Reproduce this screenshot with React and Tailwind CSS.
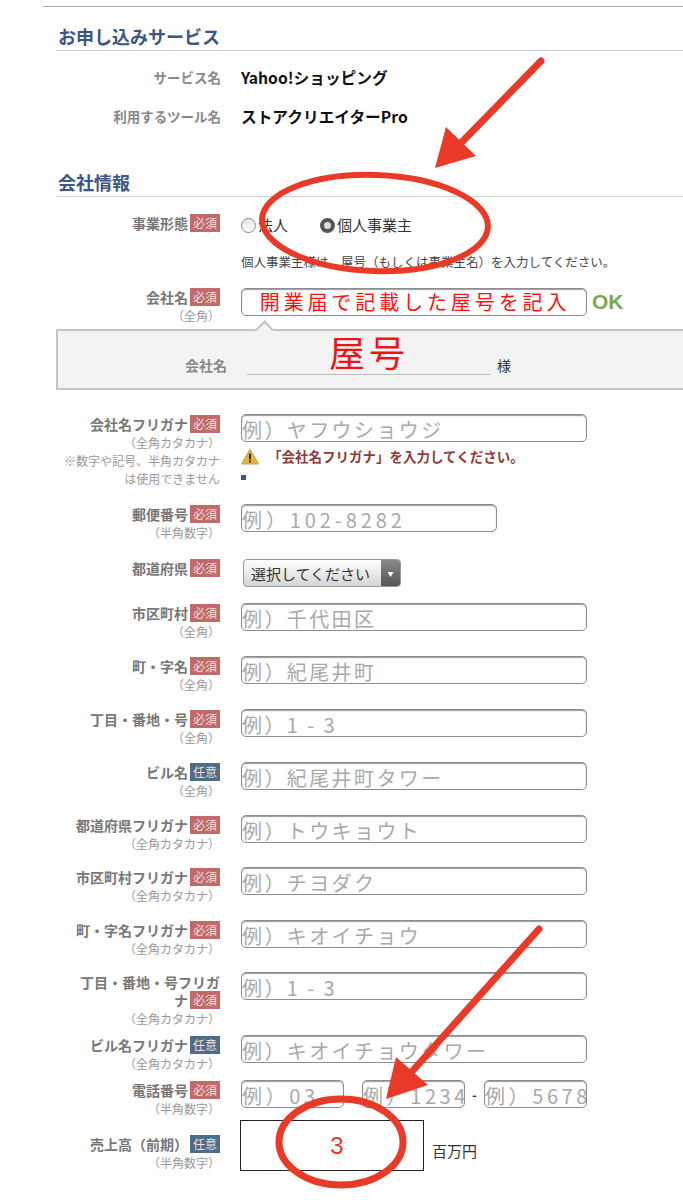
import React from 'react';

const fieldClass =
  'h-[28px] rounded-[5px] border border-[#8d8d8d] shadow-[inset_0_1px_1px_#999] bg-white text-[20px] outline-none placeholder:text-[#a9a9a9] min-w-0';

const Badge = ({ optional }) => (
  <span
    className={`inline-block w-[30px] h-[18px] ml-[2px] align-top text-center text-[12px] leading-[18px] font-normal text-[#f3dede] ${
      optional ? 'bg-[#4f6d85]' : 'bg-[#c06a6a]'
    }`}
  >
    {optional ? '任意' : '必須'}
  </span>
);

// ラベル列 + 入力列の1行
const Row = ({ label, optional, sub, note, height, labelClass = '', children }) => (
  <div className={`flex ${height}`}>
    <div className={`w-[164px] shrink-0 text-right text-[14px] leading-[18px] font-bold text-[#777] ${labelClass}`}>
      <div>
        {label}
        <Badge optional={optional} />
      </div>
      {sub && <div className="text-[12px] leading-[19px] font-normal text-[#999]">{sub}</div>}
      {note && <div className="text-[12px] leading-[18px] font-normal text-[#999]">{note}</div>}
    </div>
    <div className="ml-[21px] flex-1 min-w-0">{children}</div>
  </div>
);

const Field = ({ placeholder, width = 'w-[346px]', tracking = 'tracking-[2.4px]' }) => (
  <input
    className={`${fieldClass} ${width} ${tracking} -mt-[1px] block pt-[3px] leading-[24px]`}
    placeholder={placeholder}
    readOnly
  />
);

const SectionTitle = ({ children, height }) => (
  <h2 className={`${height} flex items-end border-b border-[#cfcfcf] pb-[2px] pl-[2px] text-[18px] leading-[24px] font-bold text-[#3d5684]`}>
    {children}
  </h2>
);

const Radio = ({ checked }) => (
  <span
    className={`inline-block w-[15px] h-[15px] rounded-full ${
      checked
        ? 'border-[4px] border-[#555] bg-[#ddd]'
        : 'border border-[#8a8a8a] bg-gradient-to-b from-[#e5e5e5] to-white'
    }`}
  />
);

const rows = [
  { label: '市区町村', sub: '（全角）', placeholder: '例）千代田区', height: 'h-[53px]' },
  { label: '町・字名', sub: '（全角）', placeholder: '例）紀尾井町', height: 'h-[53px]' },
  { label: '丁目・番地・号', sub: '（全角）', placeholder: '例）1 - 3', height: 'h-[53px]' },
  { label: 'ビル名', optional: true, sub: '（全角）', placeholder: '例）紀尾井町タワー', height: 'h-[53px]' },
  { label: '都道府県フリガナ', sub: '（全角カタカナ）', placeholder: '例）トウキョウト', height: 'h-[52px]' },
  { label: '市区町村フリガナ', sub: '（全角カタカナ）', placeholder: '例）チヨダク', height: 'h-[53px]' },
  { label: '町・字名フリガナ', sub: '（全角カタカナ）', placeholder: '例）キオイチョウ', height: 'h-[52px]' },
  { label: <>丁目・番地・号フリガ<br />ナ</>, sub: '（全角カタカナ）', placeholder: '例）1 - 3', height: 'h-[63px]' },
  { label: 'ビル名フリガナ', optional: true, sub: '（全角カタカナ）', placeholder: '例）キオイチョウタワー', height: 'h-[45px]' },
];

export default function App() {
  return (
    <div className="relative w-[683px] h-[1200px] overflow-hidden bg-white font-['Noto_Sans_CJK_JP','Noto_Sans',sans-serif]">
      <div className="mt-[6px] ml-[43px] h-px bg-[#aaa]" />

      <div className="pl-[56px]">
        <SectionTitle height="h-[44px]">お申し込みサービス</SectionTitle>

        <div className="flex h-[36px] items-end leading-[19px]">
          <div className="w-[165px] shrink-0 text-right text-[13.5px] font-bold text-[#888]">サービス名</div>
          <div className="ml-[20px] text-[15.7px] font-bold text-[#111]">Yahoo!ショッピング</div>
        </div>
        <div className="flex h-[39px] items-end leading-[19px]">
          <div className="w-[165px] shrink-0 text-right text-[13.5px] font-bold text-[#888]">利用するツール名</div>
          <div className="ml-[20px] text-[15.7px] font-bold text-[#111]">ストアクリエイターPro</div>
        </div>

        <SectionTitle height="h-[71px]">会社情報</SectionTitle>

        <div className="mt-[17px]">
          <Row label="事業形態" height="h-[74px]">
            <div className="flex h-[22px] items-center text-[15px] text-[#333]">
              <Radio />
              <span className="ml-[2px] w-[62px]">法人</span>
              <Radio checked />
              <span className="ml-[2px]">個人事業主</span>
            </div>
            <p className="mt-[17px] text-[12.5px] leading-[18px] whitespace-nowrap text-[#444]">
              個人事業主様は、屋号（もしくは事業主名）を入力してください。
            </p>
          </Row>

          <Row label="会社名" sub="（全角）" height="h-[41px]">
            <div className="flex items-center">
              <input
                className={`${fieldClass} w-[346px] -mt-[1px] block pl-[2px] text-center text-[#ff1010] tracking-[3.9px]`}
                defaultValue="開業届で記載した屋号を記入"
                readOnly
              />
              <span className="ml-[5px] text-[21px] leading-[28px] font-bold text-[#7aa84c] font-['Liberation_Sans',sans-serif]">OK</span>
            </div>
          </Row>
        </div>

        {/* 吹き出し */}
        <div className="relative flex h-[61px] items-start border-2 border-r-0 border-[#c4c4c4] bg-[#f3f3f3]">
          <span className="absolute -top-[8px] left-[200px] w-[13px] h-[13px] rotate-45 border-t-2 border-l-2 border-[#c4c4c4] bg-[#f3f3f3]" />
          <span className="mt-[25px] w-[169px] text-right text-[14px] leading-[19px] font-bold text-[#888]">会社名</span>
          <div className="ml-[20px] w-[243px] h-[44px] border-b border-[#bbb] text-[36px] leading-[40px] tracking-[4px] pl-[82px] text-[#f01414] whitespace-nowrap">
            屋号
          </div>
          <span className="mt-[25px] ml-[7px] text-[14px] leading-[19px] text-[#333]">様</span>
        </div>

        <div className="mt-[25px]">
          <Row
            label="会社名フリガナ"
            sub="（全角カタカナ）"
            note={<>※数字や記号、半角カタカナ<br />は使用できません</>}
            height="h-[90px]"
          >
            <Field placeholder="例）ヤフウショウジ" />
            <div className="mt-[4px] flex h-[20px] items-center">
              <svg width="18" height="17" viewBox="0 0 18 17">
                <path d="M9 1 L17.5 16 H0.5 Z" fill="#e3b53c" stroke="#c9a24a" strokeLinejoin="round" />
                <rect x="8" y="5.5" width="2" height="6" fill="#3a2d10" />
                <rect x="8" y="12.5" width="2" height="2" fill="#3a2d10" />
              </svg>
              <span className="ml-[9px] text-[13.5px] font-bold text-[#8f3b3b] whitespace-nowrap">「会社名フリガナ」を入力してください。</span>
            </div>
            <div className="mt-[9px] w-[5px] h-[5px] bg-[#3d5684]" />
          </Row>

          <Row label="郵便番号" sub="（半角数字）" height="h-[54px]">
            <Field placeholder="例）102-8282" width="w-[256px]" tracking="tracking-[3.9px]" />
          </Row>

          <Row label="都道府県" height="h-[45px]">
            <div className="ml-[2px] flex h-[28px] w-[158px] overflow-hidden rounded-[4px] border border-[#999] bg-gradient-to-b from-white to-[#d5d5d5]">
              <span className="flex-1 pl-[7px] text-[15px] leading-[27px] text-[#333] whitespace-nowrap">選択してください</span>
              <span className="flex w-[19px] items-center justify-center bg-gradient-to-b from-[#8a8a8a] to-[#555] text-[6px] text-white">▼</span>
            </div>
          </Row>

          {rows.map((row) => (
            <Row key={row.placeholder + row.height} label={row.label} optional={row.optional} sub={row.sub} height={row.height}>
              <Field placeholder={row.placeholder} />
            </Row>
          ))}

          <Row label="電話番号" sub="（半角数字）" height="h-[39px]">
            <div className="flex w-[346px] items-center">
              <Field placeholder="例）03" width="w-[103px]" tracking="tracking-[3.6px]" />
              <span className="w-[18px]" />
              <Field placeholder="例）1234" width="w-[103px]" tracking="tracking-[3.6px]" />
              <span className="w-[19px] text-center text-[13px] font-bold text-[#333]">-</span>
              <Field placeholder="例）5678" width="w-[103px]" tracking="tracking-[3.6px]" />
            </div>
          </Row>

          <Row label="売上高（前期）" optional sub="（半角数字）" height="h-[51px]" labelClass="mt-[15px]">
            <div className="flex">
              <input
                className="-ml-[1px] h-[51px] w-[184px] border border-[#222] bg-white pl-[10px] text-center text-[24px] text-[#e0392b] outline-none font-['Liberation_Sans',sans-serif]"
                defaultValue="3"
                readOnly
              />
              <span className="mt-[20px] ml-[8px] text-[15px] leading-[22px] text-[#333]">百万円</span>
            </div>
          </Row>
        </div>
      </div>

      {/* 赤い手書き注釈 */}
      <svg className="absolute inset-0 pointer-events-none" width="683" height="1200" viewBox="0 0 683 1200" fill="none">
        <path d="M541 61 L458 146" stroke="#e93a27" strokeWidth="7" strokeLinecap="round" />
        <path d="M435 168 L446 127 L476 156 Z" fill="#e93a27" />
        <ellipse cx="375" cy="223" rx="113" ry="48" stroke="#e93a27" strokeWidth="6" transform="rotate(2 375 223)" />
        <path d="M539 929 L408 1076" stroke="#e93a27" strokeWidth="7" strokeLinecap="round" />
        <path d="M386 1099 L396 1057 L428 1085 Z" fill="#e93a27" />
        <ellipse cx="341" cy="1142" rx="62" ry="43" stroke="#e93a27" strokeWidth="7" />
      </svg>
    </div>
  );
}
